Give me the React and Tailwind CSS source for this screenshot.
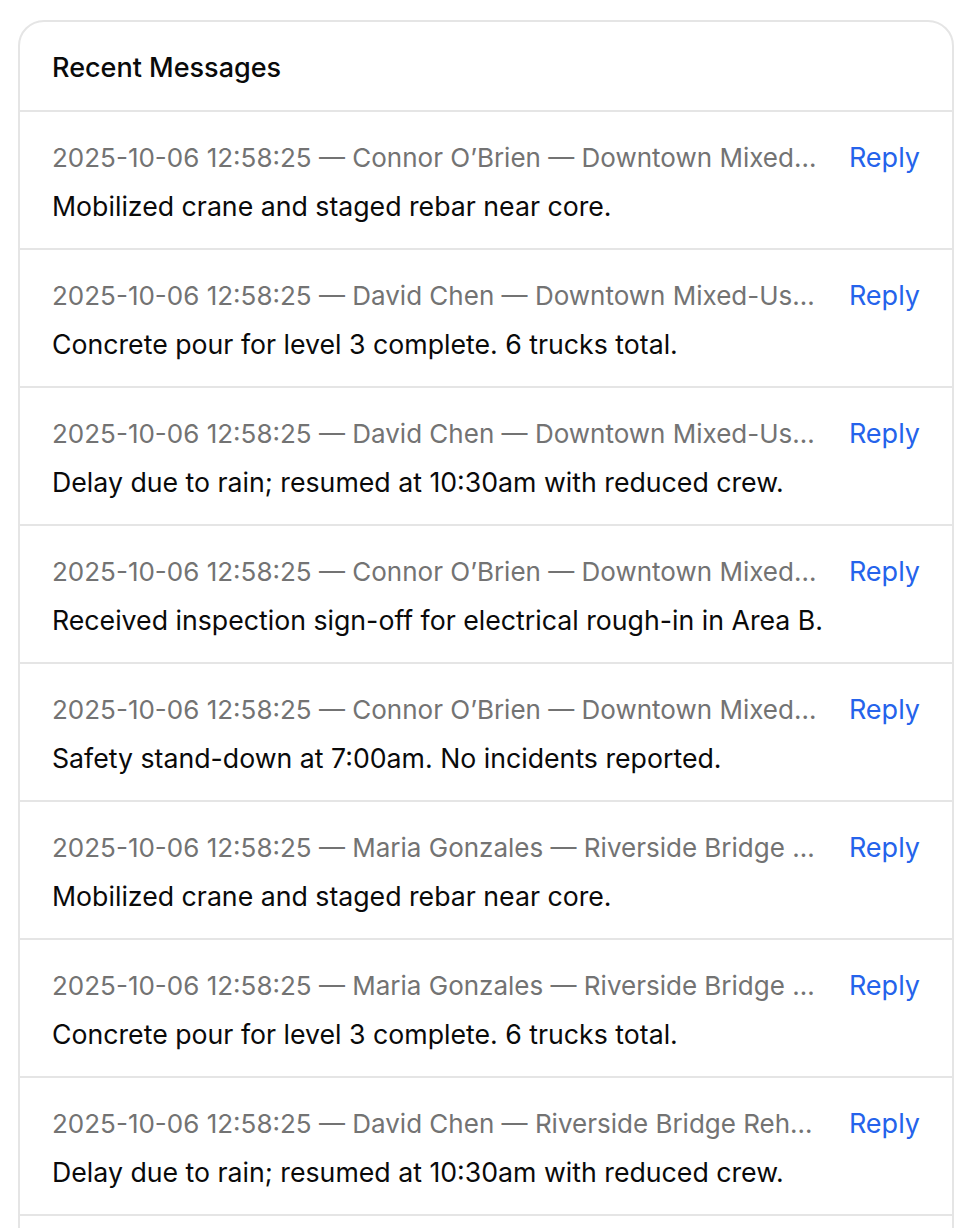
const MESSAGES = [
  { ts: '2025-10-06 12:58:25', who: 'Connor O’Brien', project: 'Downtown Mixed-Use Tower', body: 'Mobilized crane and staged rebar near core.' },
  { ts: '2025-10-06 12:58:25', who: 'David Chen', project: 'Downtown Mixed-Use Tower', body: 'Concrete pour for level 3 complete. 6 trucks total.' },
  { ts: '2025-10-06 12:58:25', who: 'David Chen', project: 'Downtown Mixed-Use Tower', body: 'Delay due to rain; resumed at 10:30am with reduced crew.' },
  { ts: '2025-10-06 12:58:25', who: 'Connor O’Brien', project: 'Downtown Mixed-Use Tower', body: 'Received inspection sign-off for electrical rough-in in Area B.' },
  { ts: '2025-10-06 12:58:25', who: 'Connor O’Brien', project: 'Downtown Mixed-Use Tower', body: 'Safety stand-down at 7:00am. No incidents reported.' },
  { ts: '2025-10-06 12:58:25', who: 'Maria Gonzales', project: 'Riverside Bridge Rehabilitation', body: 'Mobilized crane and staged rebar near core.' },
  { ts: '2025-10-06 12:58:25', who: 'Maria Gonzales', project: 'Riverside Bridge Rehabilitation', body: 'Concrete pour for level 3 complete. 6 trucks total.' },
  { ts: '2025-10-06 12:58:25', who: 'David Chen', project: 'Riverside Bridge Rehabilitation', body: 'Delay due to rain; resumed at 10:30am with reduced crew.' },
  { ts: '2025-10-06 12:58:25', who: 'Maria Gonzales', project: 'Riverside Bridge Rehabilitation', body: 'Received inspection sign-off for electrical rough-in in Area B.' },
  { ts: '2025-10-06 12:58:25', who: 'David Chen', project: 'Riverside Bridge Rehabilitation', body: 'Safety stand-down at 7:00am. No incidents reported.' },
]

export default function App() {
  return (
    <div className="min-h-screen bg-white pl-[18px] pt-[20px] pr-[24px] pb-8 font-['Inter',sans-serif]">
      <div className="rounded-[26px] border-2 border-[#e5e5e5] bg-white overflow-hidden">
        <div className="px-8 pt-[26px] pb-[22px] border-b-2 border-[#e5e5e5]">
          <h2 className="text-[27px] leading-[40px] font-medium text-[#0a0a0a]">Recent Messages</h2>
        </div>
        <ul>
          {MESSAGES.map((m, i) => (
            <li key={i} className="px-8 pt-[26px] pb-[22px] border-b-2 border-[#e5e5e5] last:border-b-0">
              <div className="flex items-center gap-6">
                <div className="flex-1 min-w-0 truncate text-[26px] leading-[40px] text-[#737373]">
                  {m.ts} — {m.who} — {m.project}
                </div>
                <button className="shrink-0 text-[27px] leading-[40px] text-[#2563eb]">Reply</button>
              </div>
              <p className="mt-2 text-[26.7px] leading-[40px] text-[#0a0a0a]">{m.body}</p>
            </li>
          ))}
        </ul>
      </div>
    </div>
  )
}
